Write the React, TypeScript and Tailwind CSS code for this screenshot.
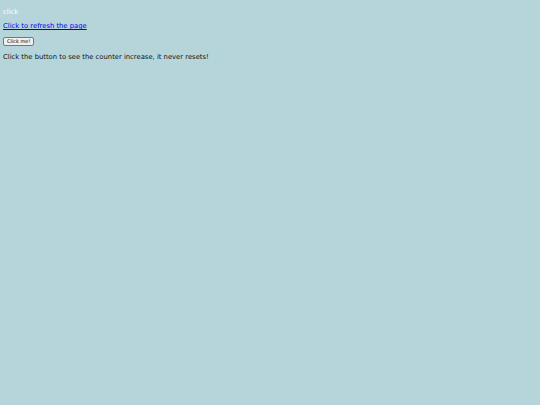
export default function App() {
  return (
    <div className="min-h-screen bg-[#b5d5da] px-[3px] pt-[8px] text-[6.8px] leading-[9px] text-[#111]" style={{ fontFamily: '"DejaVu Sans", sans-serif' }}>
      <div className="text-white">click</div>
      <a href="#" className="mt-[5px] block text-[#0000ee] underline">Click to refresh the page</a>
      <button className="mt-[6px] rounded-[2px] border border-[#767676] bg-[#efefef] px-[3px] text-[5px] leading-[7px] text-black">Click me!</button>
      <p className="mt-[7px]">Click the button to see the counter increase, it never resets!</p>
    </div>
  )
}
